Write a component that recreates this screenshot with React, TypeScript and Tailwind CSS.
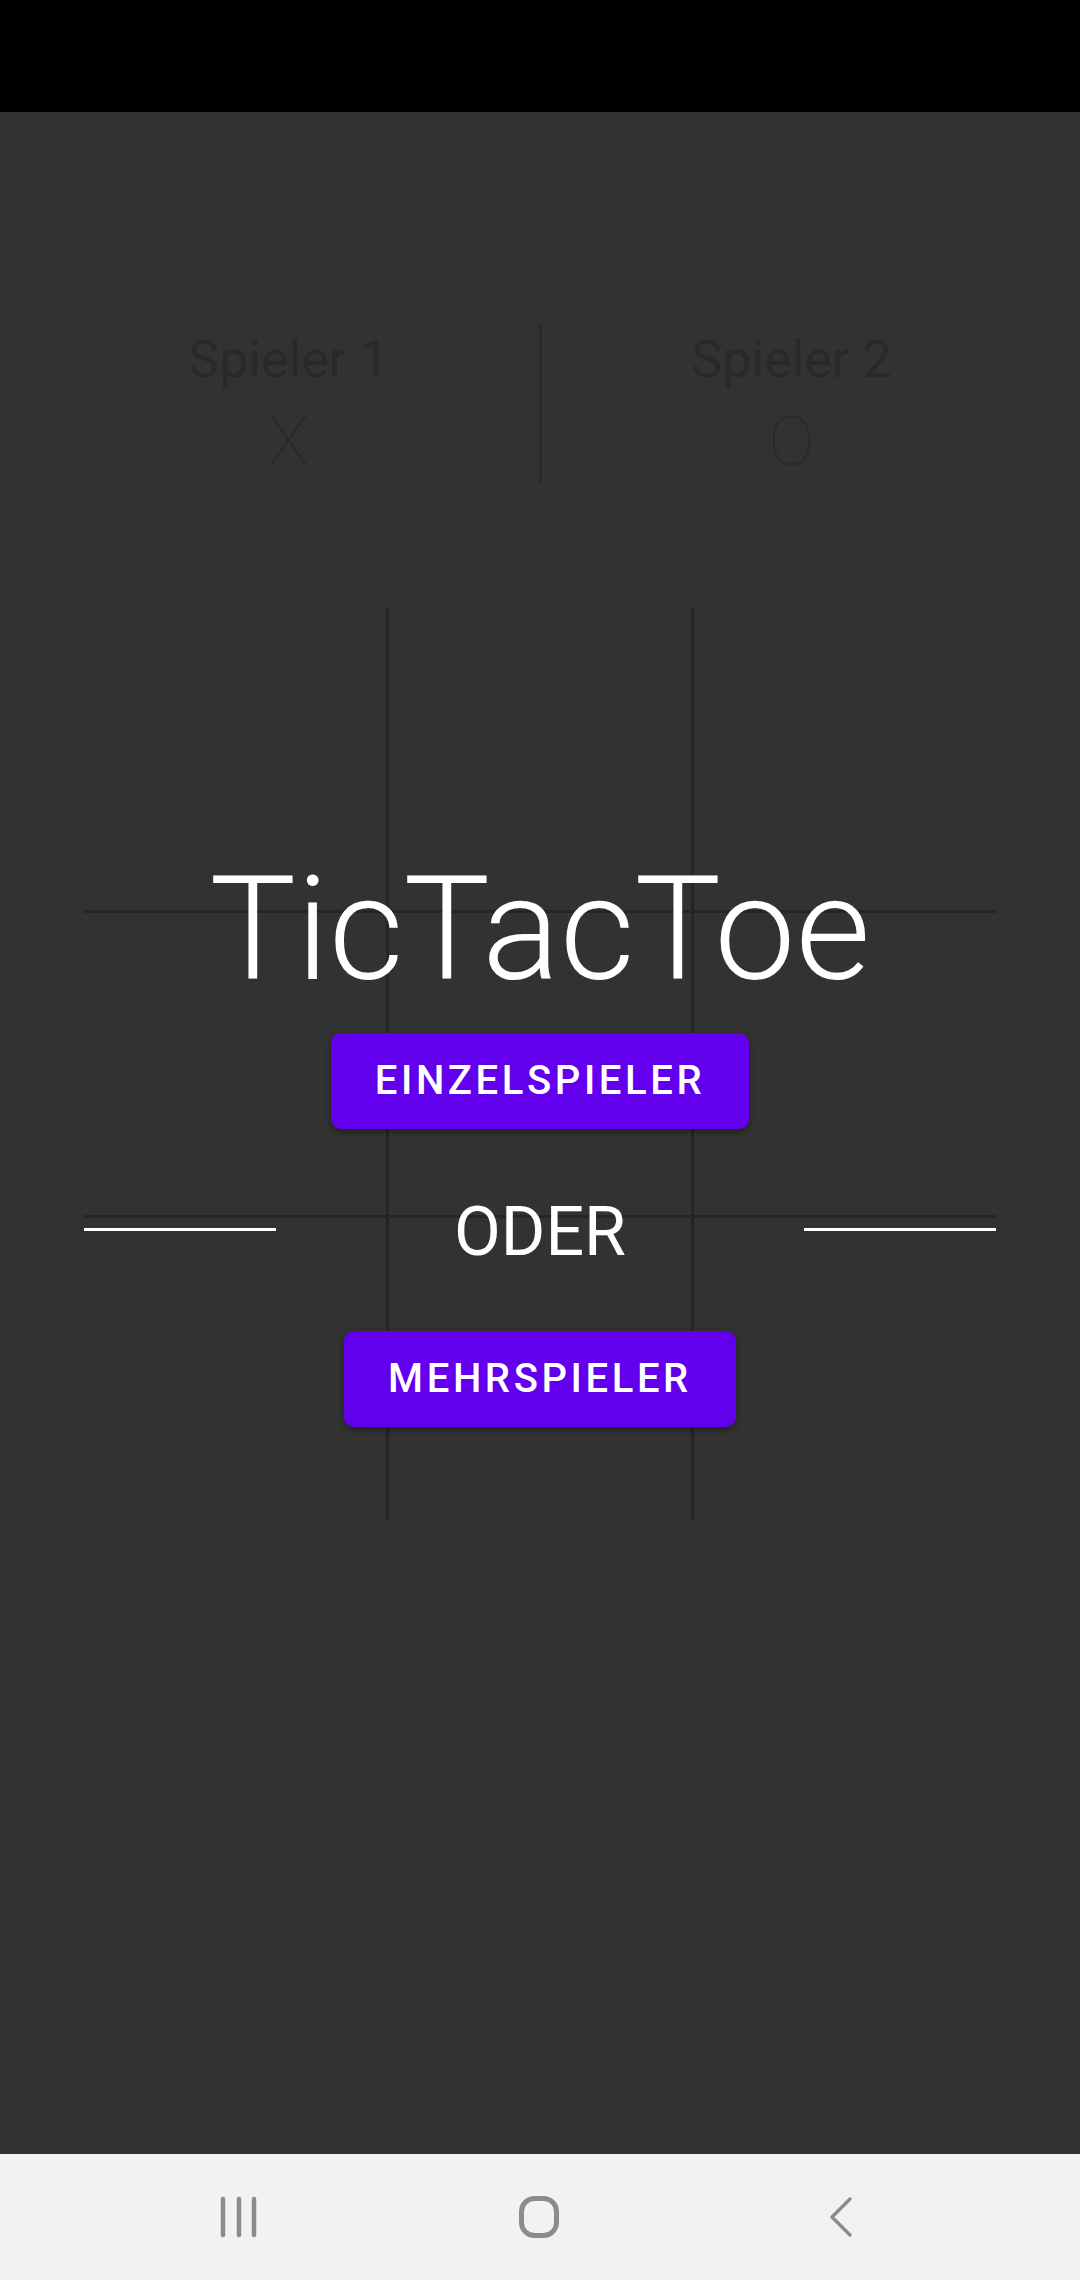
import React from "react"

const FONT = { fontFamily: "Roboto, 'Noto Sans', 'Liberation Sans', sans-serif" }

function PlayerColumn({ name, mark }: { name: string; mark: string }) {
  return (
    <div className="flex w-[500px] flex-col items-center pt-[6px] pb-[2px]">
      <div className="text-[52px] leading-[61px] font-normal text-[#292929]">{name}</div>
      <div className="mt-[12px] text-[68px] leading-[80px] font-thin text-[#292929]">{mark}</div>
    </div>
  )
}

function MenuButton({ label }: { label: string }) {
  return (
    <button
      type="button"
      className="flex h-[96px] items-center rounded-[10px] bg-[#6200ee] px-[44px] text-[40px] font-medium tracking-[0.09em] text-white shadow-[0_3px_6px_rgba(0,0,0,0.35)]"
    >
      {label}
    </button>
  )
}

function Board() {
  const cells = Array.from({ length: 9 })
  return (
    <div className="relative w-[914px] h-[914px] border border-[#2e2e2e]">
      <div className="grid h-full w-full grid-cols-3 grid-rows-3 gap-[3px] bg-[#252525]">
        {cells.map((_, i) => (
          <div key={i} className="bg-[#323232]" />
        ))}
      </div>

      {/* menu overlay on top of the board */}
      <div className="absolute inset-0 flex flex-col items-center pt-[237px]">
        <div className="text-[145px] leading-[168px] font-light text-white">TicTacToe</div>
        <div className="mt-[20px]">
          <MenuButton label="EINZELSPIELER" />
        </div>
        <div className="mt-[64px] flex w-full items-center">
          <div className="mb-[6px] h-[3px] w-[192px] bg-white" />
          <div className="flex-1 text-center text-[68px] leading-[79px] font-normal text-white">ODER</div>
          <div className="mb-[6px] h-[3px] w-[192px] bg-white" />
        </div>
        <div className="mt-[59px]">
          <MenuButton label="MEHRSPIELER" />
        </div>
      </div>
    </div>
  )
}

export default function App() {
  return (
    <div className="flex h-[2280px] w-[1080px] flex-col bg-[#323232]" style={FONT}>
      <div className="h-[112px] w-full bg-black" />

      <div className="flex flex-1 flex-col items-center">
        <div className="mt-[211px] flex w-full justify-center">
          <PlayerColumn name="Spieler 1" mark="X" />
          <div className="w-[3px] self-stretch bg-[#2b2b2b]" />
          <PlayerColumn name="Spieler 2" mark="O" />
        </div>

        <div className="mt-[123px]">
          <Board />
        </div>
      </div>

      <div className="flex h-[126px] w-full items-center justify-center gap-[241px] bg-[#f2f2f2]">
        <div className="flex w-[60px] justify-center">
          <svg width="40" height="42" viewBox="0 0 40 42">
            <g stroke="#8c8c8c" strokeWidth="4.5" strokeLinecap="round">
              <line x1="4" y1="3" x2="4" y2="39" />
              <line x1="20" y1="3" x2="20" y2="39" />
              <line x1="35" y1="3" x2="35" y2="39" />
            </g>
          </svg>
        </div>
        <div className="flex w-[60px] justify-center">
          <svg width="44" height="44" viewBox="0 0 44 44">
            <rect x="3.5" y="3.5" width="35" height="37" rx="13" fill="none" stroke="#8c8c8c" strokeWidth="5" />
          </svg>
        </div>
        <div className="flex w-[60px] justify-center">
          <svg width="26" height="42" viewBox="0 0 26 42">
            <polyline points="22,3 4,21 22,39" fill="none" stroke="#8c8c8c" strokeWidth="3.5" strokeLinecap="round" strokeLinejoin="round" />
          </svg>
        </div>
      </div>
    </div>
  )
}
